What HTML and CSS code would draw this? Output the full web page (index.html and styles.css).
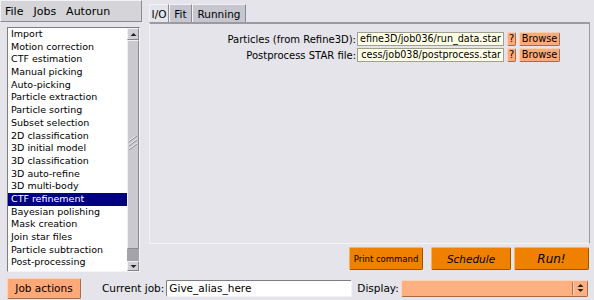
FILE: index.html
```html
<!DOCTYPE html>
<html lang="en">
<head>
    <meta charset="UTF-8">
    <title>RELION - CTF refinement</title>
    <link rel="stylesheet" href="styles.css">
</head>
<body>
<div class="app">
    <div class="main">
        <div class="left">
            <div class="menubar">
                <span>File</span>
                <span>Jobs</span>
                <span>Autorun</span>
            </div>
            <div class="browser">
                <ul class="jobs">
                    <li>Import</li>
                    <li>Motion correction</li>
                    <li>CTF estimation</li>
                    <li>Manual picking</li>
                    <li>Auto-picking</li>
                    <li>Particle extraction</li>
                    <li>Particle sorting</li>
                    <li>Subset selection</li>
                    <li>2D classification</li>
                    <li>3D initial model</li>
                    <li>3D classification</li>
                    <li>3D auto-refine</li>
                    <li>3D multi-body</li>
                    <li class="sel">CTF refinement</li>
                    <li>Bayesian polishing</li>
                    <li>Mask creation</li>
                    <li>Join star files</li>
                    <li>Particle subtraction</li>
                    <li>Post-processing</li>
                </ul>
                <div class="scrollbar">
                    <div class="sb-btn up">
                        <svg width="7" height="5" viewBox="0 0 7 5"><polygon points="0.5,4 3.5,1 6.5,4" fill="#222"/></svg>
                    </div>
                    <div class="sb-thumb">
                        <svg width="8" height="14" viewBox="0 0 8 14">
                            <line x1="0" y1="5" x2="8" y2="-1" stroke="#f4f4f6"/>
                            <line x1="0" y1="6" x2="8" y2="0" stroke="#8e8e94"/>
                            <line x1="0" y1="9" x2="8" y2="3" stroke="#f4f4f6"/>
                            <line x1="0" y1="10" x2="8" y2="4" stroke="#8e8e94"/>
                            <line x1="0" y1="13" x2="8" y2="7" stroke="#f4f4f6"/>
                            <line x1="0" y1="14" x2="8" y2="8" stroke="#8e8e94"/>
                        </svg>
                    </div>
                    <div class="sb-track"></div>
                    <div class="sb-btn down">
                        <svg width="7" height="5" viewBox="0 0 7 5"><polygon points="0.5,1 3.5,4 6.5,1" fill="#222"/></svg>
                    </div>
                </div>
            </div>
        </div>

        <div class="right">
            <div class="tabs">
                <span class="tab active">I/O</span>
                <span class="tab tab-fit">Fit</span>
                <span class="tab tab-run">Running</span>
            </div>
            <div class="panel">
                <div class="field">
                    <span class="label">Particles (from Refine3D):</span>
                    <div class="path"><span>efine3D/job036/run_data.star</span></div>
                    <button class="help">?</button>
                    <button class="browse">Browse</button>
                </div>
                <div class="field">
                    <span class="label">Postprocess STAR file:</span>
                    <div class="path"><span>cess/job038/postprocess.star</span></div>
                    <button class="help">?</button>
                    <button class="browse">Browse</button>
                </div>
            </div>
            <div class="actions">
                <button class="run-btn print">Print command</button>
                <button class="run-btn schedule">Schedule</button>
                <button class="run-btn go">Run!</button>
            </div>
        </div>
    </div>

    <div class="bottom">
        <button class="job-actions">Job actions</button>
        <span class="blabel current">Current job:</span>
        <div class="alias">Give_alias_here</div>
        <span class="blabel">Display:</span>
        <div class="display">
            <span class="display-sep"></span>
            <svg width="7" height="10" viewBox="0 0 7 10">
                <polygon points="0.5,4 3.5,1 6.5,4" fill="#222"/>
                <polygon points="0.5,6 3.5,9 6.5,6" fill="#222"/>
            </svg>
        </div>
    </div>
</div>
</body>
</html>
```

FILE: styles.css
```css
body { margin: 0; width: 594px; height: 300px; overflow: hidden; background: #e4e4ea; font-family: "DejaVu Sans", sans-serif; font-size: 10px; color: #000; }
button { font-family: "DejaVu Sans", sans-serif; padding: 0; margin: 0; cursor: pointer; }

.main { display: flex; height: 276px; }
.left { width: 149px; flex: none; }

/* menu bar */
.menubar { width: 142px; height: 22px; box-sizing: border-box; display: flex; align-items: center; gap: 10px; padding-left: 4px; font-size: 11px; background: #d4d4d9; border: 1px solid; border-color: #f2f2f4 #8a8a90 #8a8a90 #f2f2f4; }

/* job browser */
.browser { margin: 5px 0 0 7px; width: 133px; height: 245px; box-sizing: border-box; display: flex; background: #fff; border: 1px solid; border-color: #7c7c82 #f4f4f6 #f4f4f6 #7c7c82; }
.jobs { flex: 1; list-style: none; margin: 0; padding: 0; font-size: 9.5px; }
.jobs li { height: 12.7px; line-height: 12.7px; padding-left: 3px; white-space: nowrap; }
.jobs li.sel { background: #000080; color: #fff; }

.scrollbar { width: 12px; display: flex; flex-direction: column; background: #a8a8ae; }
.sb-btn { height: 12px; box-sizing: border-box; display: flex; align-items: center; justify-content: center; background: #d0d0d5; border: 1px solid; border-color: #f2f2f4 #85858b #85858b #f2f2f4; }
.sb-btn.down { height: 10px; }
.sb-thumb { flex: 1; box-sizing: border-box; display: flex; align-items: center; justify-content: center; padding-bottom: 4px; background: #c9c9ce; border: 1px solid; border-color: #f0f0f2 #8a8a90 #8a8a90 #f0f0f2; }
.sb-track { height: 12px; background: #a3a3a9; }

/* tabs */
.right { flex: 1; padding: 4px 4px 0 0; }
.tabs { display: flex; height: 18px; font-size: 10.5px; }
.tab { width: 20px; box-sizing: border-box; text-align: center; line-height: 18px; background: #c6c6ce; border: 1px solid; border-bottom: none; border-color: #f2f2f4 #8a8a90 #8a8a90 #f2f2f4; }
.tab.active { background: #e4e4ea; }
.tab-fit { width: 23px; }
.tab-run { width: 54px; }

.panel { height: 222px; box-sizing: border-box; padding: 8px 29px 0 0; background: #e4e4ea; border: 1px solid; border-top: 2px solid #9a9aa0; border-color: #9a9aa0 #9a9aa0 #f4f4f6 #f4f4f6; display: flex; flex-direction: column; gap: 2px; }
.field { display: flex; align-items: center; height: 14px; }
.label { flex: 1; text-align: right; padding-right: 1px; white-space: nowrap; }
.path { width: 147px; height: 14px; box-sizing: border-box; display: flex; justify-content: flex-end; background: #ffffe8; border: 1px solid #a0a090; padding-right: 2px; font-size: 9.6px; line-height: 12px; white-space: nowrap; }
.help, .browse { height: 14px; box-sizing: border-box; background: #ffa878; border: 1px solid; border-color: #ffd0b0 #a86a48 #a86a48 #ffd0b0; border-radius: 2px; font-size: 9.8px; line-height: 12px; }
.help { width: 9px; margin-left: 3px; }
.browse { width: 41px; margin-left: 3px; }

/* run buttons */
.actions { display: flex; justify-content: flex-end; margin-top: 3px; height: 23px; padding-right: 1px; }
.run-btn { height: 23px; box-sizing: border-box; background: #f08000; border: 1px solid; border-color: #f8b060 #9c5400 #9c5400 #f8b060; border-radius: 2px; }
.print { width: 74px; font-size: 8.5px; }
.schedule { width: 80px; margin-left: 8px; font-size: 10.5px; font-style: italic; }
.go { width: 75px; margin-left: 3px; font-size: 12px; font-style: italic; }

/* bottom bar */
.bottom { display: flex; align-items: center; height: 24px; font-size: 10.5px; }
.job-actions { width: 74px; height: 21px; margin-left: 7px; box-sizing: border-box; background: #ffa878; border: 1px solid; border-color: #ffd0b0 #a86a48 #a86a48 #ffd0b0; border-radius: 2px; font-size: 10.5px; }
.blabel { padding-right: 2px; }
.current { margin-left: 21px; }
.alias { width: 186px; height: 17px; box-sizing: border-box; margin-right: 5px; background: #fff; border: 1px solid; border-color: #7c7c82 #f4f4f6 #f4f4f6 #7c7c82; border-radius: 2px; line-height: 15px; padding-left: 2px; }
.display { width: 187px; height: 17px; box-sizing: border-box; display: flex; align-items: center; justify-content: flex-end; gap: 3px; padding-right: 3px; background: #ffb080; border: 1px solid; border-color: #ffd6bc #a86a48 #a86a48 #ffd6bc; border-radius: 2px; }
.display-sep { width: 0; height: 13px; border-left: 1px solid #b07050; border-right: 1px solid #ffd6bc; }
```
